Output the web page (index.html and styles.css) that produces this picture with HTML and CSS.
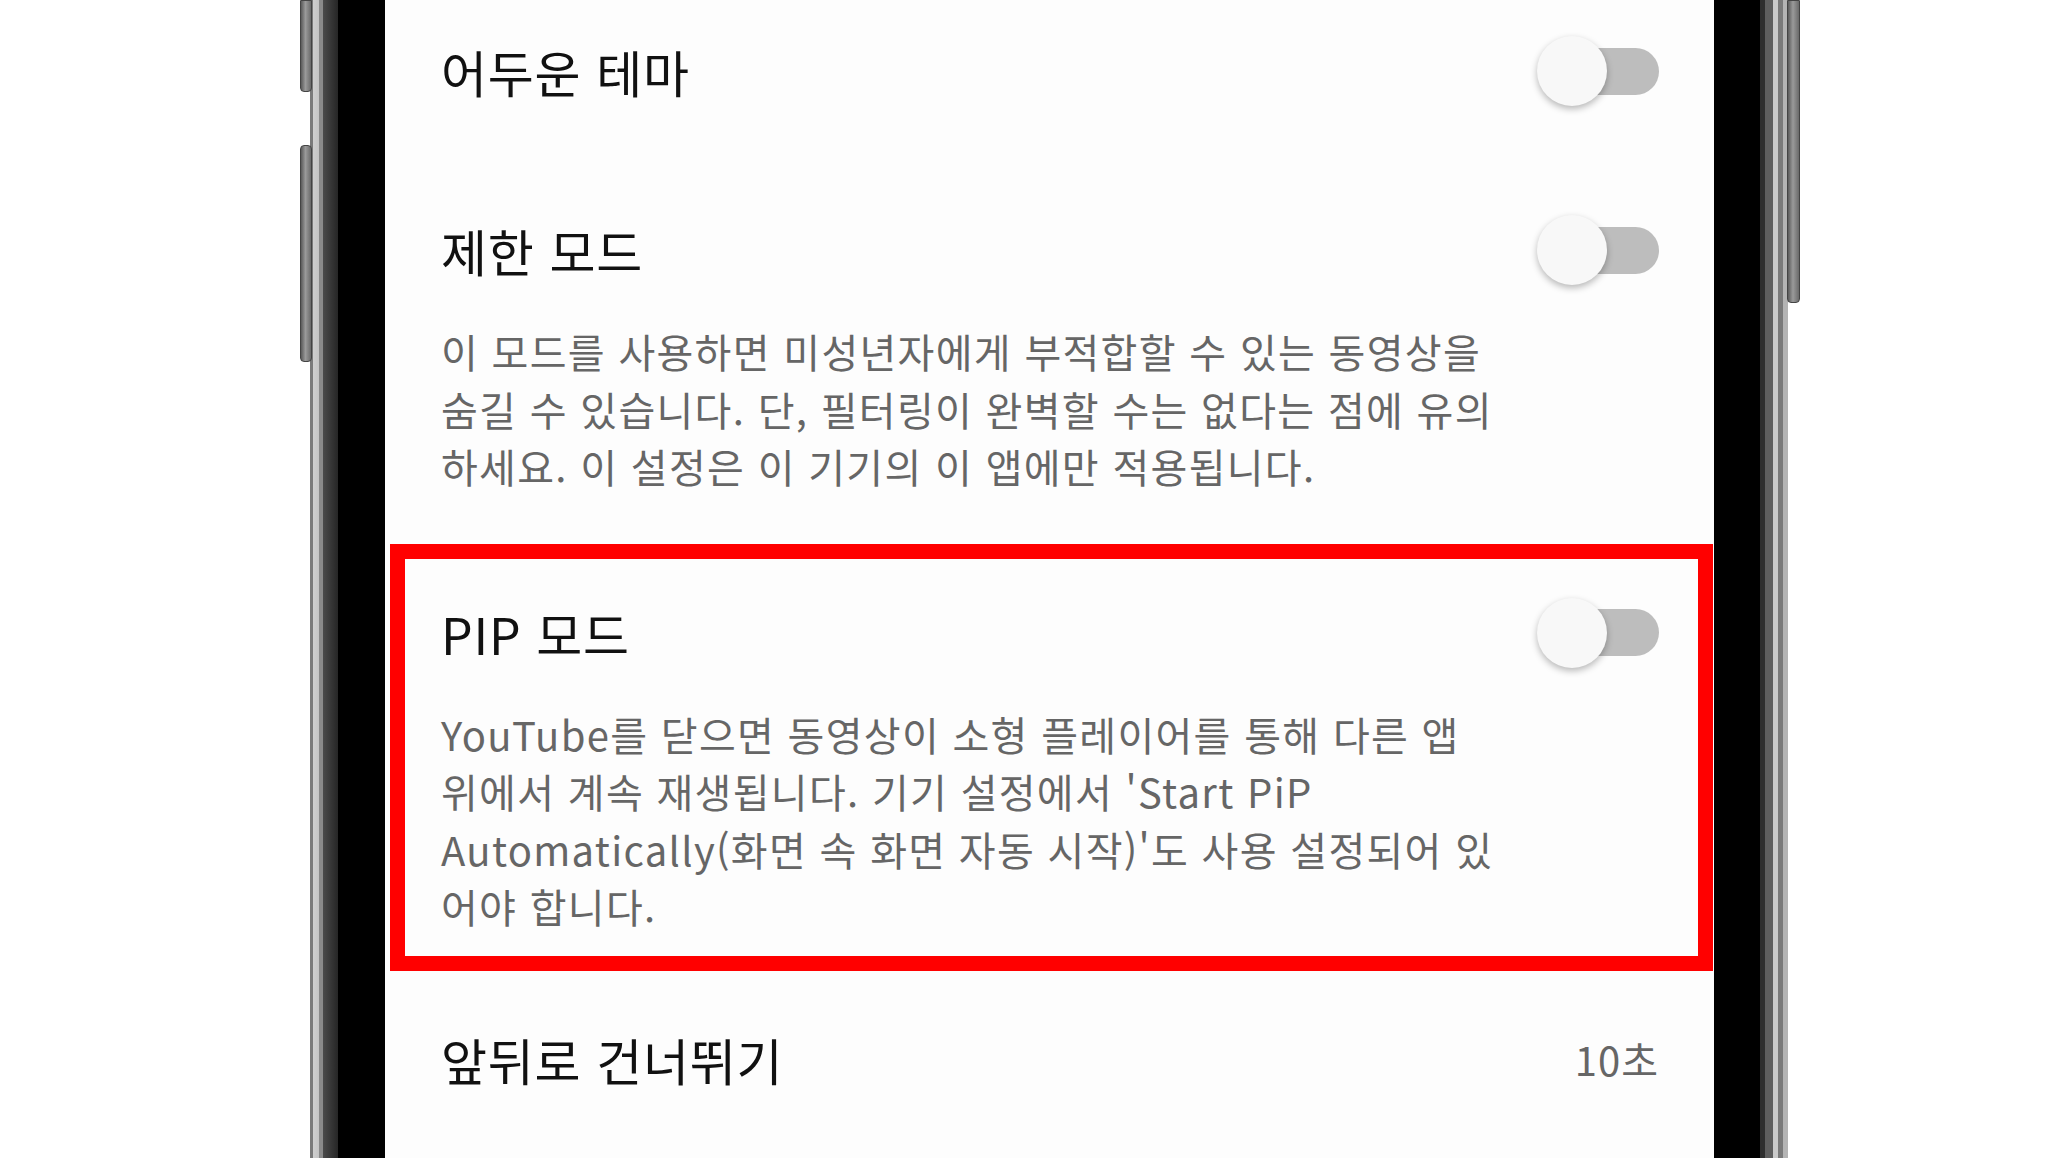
FILE: index.html
```html
<!DOCTYPE html>
<html lang="ko">
<head>
  <meta charset="UTF-8" />
  <meta name="viewport" content="width=device-width, initial-scale=1.0"/>
  <title>설정</title>
  <link rel="stylesheet" href="styles.css">
</head>
<body>

<div class="stage">
  <div class="phone">
    <span class="side-btn btn-a"></span>
    <span class="side-btn btn-b"></span>
    <span class="side-btn btn-power"></span>

    <div class="screen">
      <!-- 어두운 테마 -->
      <div class="row row-first">
        <span class="title">어두운 테마</span>
        <span class="switch"><span class="knob"></span></span>
      </div>

      <!-- 제한 모드 -->
      <div class="setting">
        <div class="row">
          <span class="title">제한 모드</span>
          <span class="switch"><span class="knob"></span></span>
        </div>
        <p class="desc">이 모드를 사용하면 미성년자에게 부적합할 수 있는 동영상을<br>숨길 수 있습니다. 단, 필터링이 완벽할 수는 없다는 점에 유의<br>하세요. 이 설정은 이 기기의 이 앱에만 적용됩니다.</p>
      </div>

      <!-- PIP 모드 (강조) -->
      <div class="setting highlight">
        <div class="row">
          <span class="title">PIP 모드</span>
          <span class="switch"><span class="knob"></span></span>
        </div>
        <p class="desc">YouTube를 닫으면 동영상이 소형 플레이어를 통해 다른 앱<br>위에서 계속 재생됩니다. 기기 설정에서 'Start PiP<br>Automatically(화면 속 화면 자동 시작)'도 사용 설정되어 있<br>어야 합니다.</p>
      </div>

      <!-- 앞뒤로 건너뛰기 -->
      <div class="row row-last">
        <span class="title">앞뒤로 건너뛰기</span>
        <span class="value">10초</span>
      </div>
    </div>
  </div>
</div>

</body>
</html>
```

FILE: styles.css
```css
:root {
  --text: #111111;
  --muted: #666666;
  --screen: #fdfdfd;
  --track: #bdbdbd;
  --knob: #f8f8f8;
  --mark: #ff0000;
}

body {
  margin: 0;
  background: #ffffff;
  font-family: "Noto Sans CJK KR", "Noto Sans", sans-serif;
  color: var(--text);
  overflow: hidden;
}

.stage {
  display: flex;
  height: 1170px;
  padding-left: 310px;
}

/* phone frame */
.phone {
  position: relative;
  display: flex;
  width: 1478px;
  height: 1158px;
  padding: 0 74px 0 75px;
  box-sizing: border-box;
  background: linear-gradient(to right,
    #7a7a7a 0px, #7a7a7a 3px,
    #cfcfcf 3px, #c4c4c4 9px,
    #8a8a8a 9px, #8a8a8a 13px,
    #4a4a4a 13px, #262626 28px,
    #000 28px, #000 1450px,
    #2e2e2e 1450px, #2e2e2e 1455px,
    #5e5e5e 1455px, #5e5e5e 1463px,
    #cacaca 1463px, #cacaca 1468px,
    #7a7a7a 1468px, #7a7a7a 1473px,
    #b4b4b4 1473px, #b4b4b4 1478px);
}

.side-btn {
  position: absolute;
  width: 12px;
  background: linear-gradient(to right, #5a5a5a, #9a9a9a 45%, #6a6a6a);
  border: 1px solid #444;
  box-sizing: border-box;
}

.btn-a {
  left: -10px;
  top: 0;
  height: 92px;
  border-radius: 0 0 4px 4px;
}

.btn-b {
  left: -10px;
  top: 145px;
  height: 217px;
  border-radius: 4px;
}

.btn-power {
  right: -12px;
  top: 0;
  width: 13px;
  height: 303px;
  border-radius: 0 0 4px 4px;
}

.screen {
  flex: 1;
  background: var(--screen);
  display: flex;
  flex-direction: column;
  padding: 0 55px 0 56px;
  overflow: hidden;
}

.row {
  display: flex;
  align-items: center;
  justify-content: space-between;
  height: 96px;
}

.row-first {
  height: 142px;
}

.setting {
  padding-top: 60px;
}

.highlight {
  border: 15px solid var(--mark);
  margin: 48px -54px 0 -51px;
  padding: 26px 39px 20px 36px;
}

.row-last {
  height: 176px;
}

.title {
  font-size: 50px;
  letter-spacing: 0.8px;
  font-weight: 400;
  white-space: nowrap;
}

.desc {
  margin: 25px 0 0;
  font-size: 40px;
  line-height: 57.5px;
  letter-spacing: 1.3px;
  color: var(--muted);
  white-space: nowrap;
}

.value {
  font-size: 40px;
  color: var(--muted);
  letter-spacing: 1px;
}

/* toggle switch (off) */
.switch {
  display: flex;
  align-items: center;
  flex: none;
  width: 110px;
  height: 47px;
  border-radius: 24px;
  background: var(--track);
}

.knob {
  flex: none;
  width: 70px;
  height: 70px;
  margin-left: -12px;
  border-radius: 50%;
  background: var(--knob);
  box-shadow: 0 3px 7px rgba(0, 0, 0, 0.28);
}
```
